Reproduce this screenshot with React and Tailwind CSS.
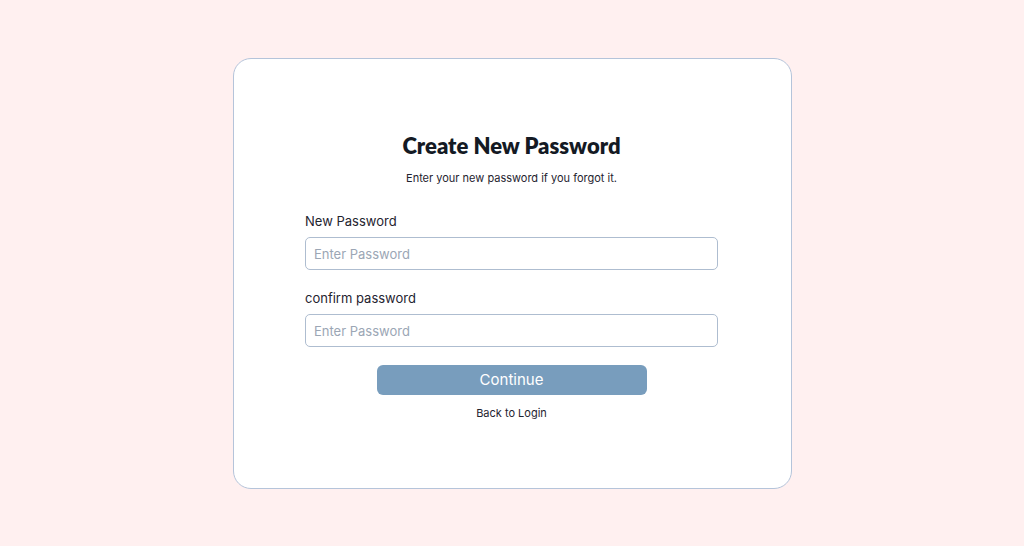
export default function App() {
  return (
    <div className="w-[1024px] h-[546px] bg-[#fff0f0] flex items-start justify-center pt-[58px]" style={{ fontFamily: "Inter, 'Noto Sans', sans-serif" }}>
      <div className="w-[559px] h-[431px] bg-white border border-[#b5c4da] rounded-[18px] flex flex-col items-center pt-[72px] pr-[1px]">
        <h1 className="text-[22px] leading-[30px] font-bold text-[#141a24]" style={{ fontFamily: "Lato, 'Noto Sans', sans-serif", fontWeight: 800 }}>Create New Password</h1>
        <p className="mt-[9px] text-[11px] leading-[16px] text-[#1f2430]">Enter your new password if you forgot it.</p>
        <div className="w-[413px] mt-[25px] flex flex-col">
          <label className="text-[13px] leading-[20px] text-[#1f2430]">New Password</label>
          <input className="mt-[6px] h-[33px] w-full rounded-[5px] border border-[#aebdd0] px-[8px] text-[13px] text-[#1f2430] placeholder:text-[#9ba6b5] outline-none" placeholder="Enter Password" type="password" />
          <label className="mt-[18px] text-[13px] leading-[20px] text-[#1f2430]">confirm password</label>
          <input className="mt-[6px] h-[33px] w-full rounded-[5px] border border-[#aebdd0] px-[8px] text-[13px] text-[#1f2430] placeholder:text-[#9ba6b5] outline-none" placeholder="Enter Password" type="password" />
        </div>
        <button className="mt-[18px] w-[270px] h-[30px] rounded-[6px] bg-[#789dbd] text-white text-[15px] leading-[30px]">Continue</button>
        <a className="mt-[10px] text-[11px] leading-[16px] text-[#1f2430]">Back to Login</a>
      </div>
    </div>
  );
}
